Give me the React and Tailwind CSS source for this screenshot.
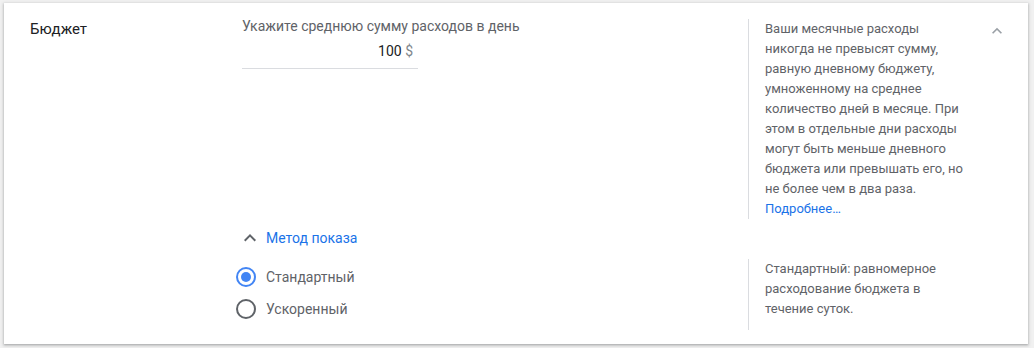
import React from "react";

function ChevronUp({ className = "", size = 24 }) {
  return (
    <svg
      width={size}
      height={size}
      viewBox="0 0 24 24"
      className={className}
      fill="currentColor"
    >
      <path d="M12 8l-6 6 1.41 1.41L12 10.83l4.59 4.58L18 14z" />
    </svg>
  );
}

function Radio({ checked, label }) {
  return (
    <label className="flex h-8 items-center gap-[10px]">
      <span
        className={[
          "flex h-[20px] w-[20px] items-center justify-center rounded-full border-2",
          checked ? "border-[#4285f4]" : "border-[#5f6368]",
        ].join(" ")}
      >
        {checked ? (
          <span className="h-[10px] w-[10px] rounded-full bg-[#4285f4]" />
        ) : null}
      </span>
      <span className="text-[14px] leading-5 text-[#5f6368]">{label}</span>
    </label>
  );
}

function Helper({ children, className = "" }) {
  return (
    <div
      className={[
        "border-l border-[#dadce0] pl-4 text-[13px] leading-5 text-[#5f6368]",
        className,
      ].join(" ")}
    >
      {children}
    </div>
  );
}

export default function App() {
  return (
    <div
      className="min-h-[348px] bg-[#f1f1f1] px-1 pt-[3px]"
      style={{ fontFamily: "Roboto, 'Noto Sans', Arial, sans-serif" }}
    >
      <div className="grid h-[341px] w-[1024px] grid-cols-[238px_506px_222px_1fr] content-start bg-white pt-4 shadow-[0_1px_2px_rgba(60,64,67,0.3),0_1px_3px_1px_rgba(60,64,67,0.15)]">
        {/* row: budget */}
        <div className="pl-[26px] text-[15px] leading-5 text-[#202124]">
          Бюджет
        </div>

        <div className="-mt-[3px]">
          <div className="text-[14px] leading-5 text-[#5f6368]">
            Укажите среднюю сумму расходов в день
          </div>
          <div className="w-[176px] border-b border-[#dadce0] pb-[7px] pr-[5px] pt-[5px] text-right text-[14px] leading-5">
            <span className="text-[#202124]">100</span>{" "}
            <span className="text-[#80868b]">$</span>
          </div>
        </div>

        <Helper>
          Ваши месячные расходы никогда не превысят сумму, равную дневному
          бюджету, умноженному на среднее количество дней в месяце. При этом в
          отдельные дни расходы могут быть меньше дневного бюджета или
          превышать его, но не более чем в два раза.{" "}
          <span className="text-[#1a73e8]">Подробнее…</span>
        </Helper>

        <div className="pl-[17px]">
          <ChevronUp size={20} className="mt-[2px] text-[#9aa0a6]" />
        </div>

        {/* row: delivery method toggle */}
        <div />
        <div className="mt-[7px] -ml-[4px] flex items-center gap-1">
          <ChevronUp className="text-[#5f6368]" />
          <span className="text-[14px] leading-5 text-[#1a73e8]">
            Метод показа
          </span>
        </div>
        <div />
        <div />

        {/* row: delivery method options */}
        <div />
        <div className="mt-[11px] -ml-[6px] flex flex-col">
          <Radio checked label="Стандартный" />
          <Radio label="Ускоренный" />
        </div>
        <Helper className="mt-[9px] pb-[11px]">
          Стандартный: равномерное расходование бюджета в течение суток.
        </Helper>
        <div />
      </div>
    </div>
  );
}
